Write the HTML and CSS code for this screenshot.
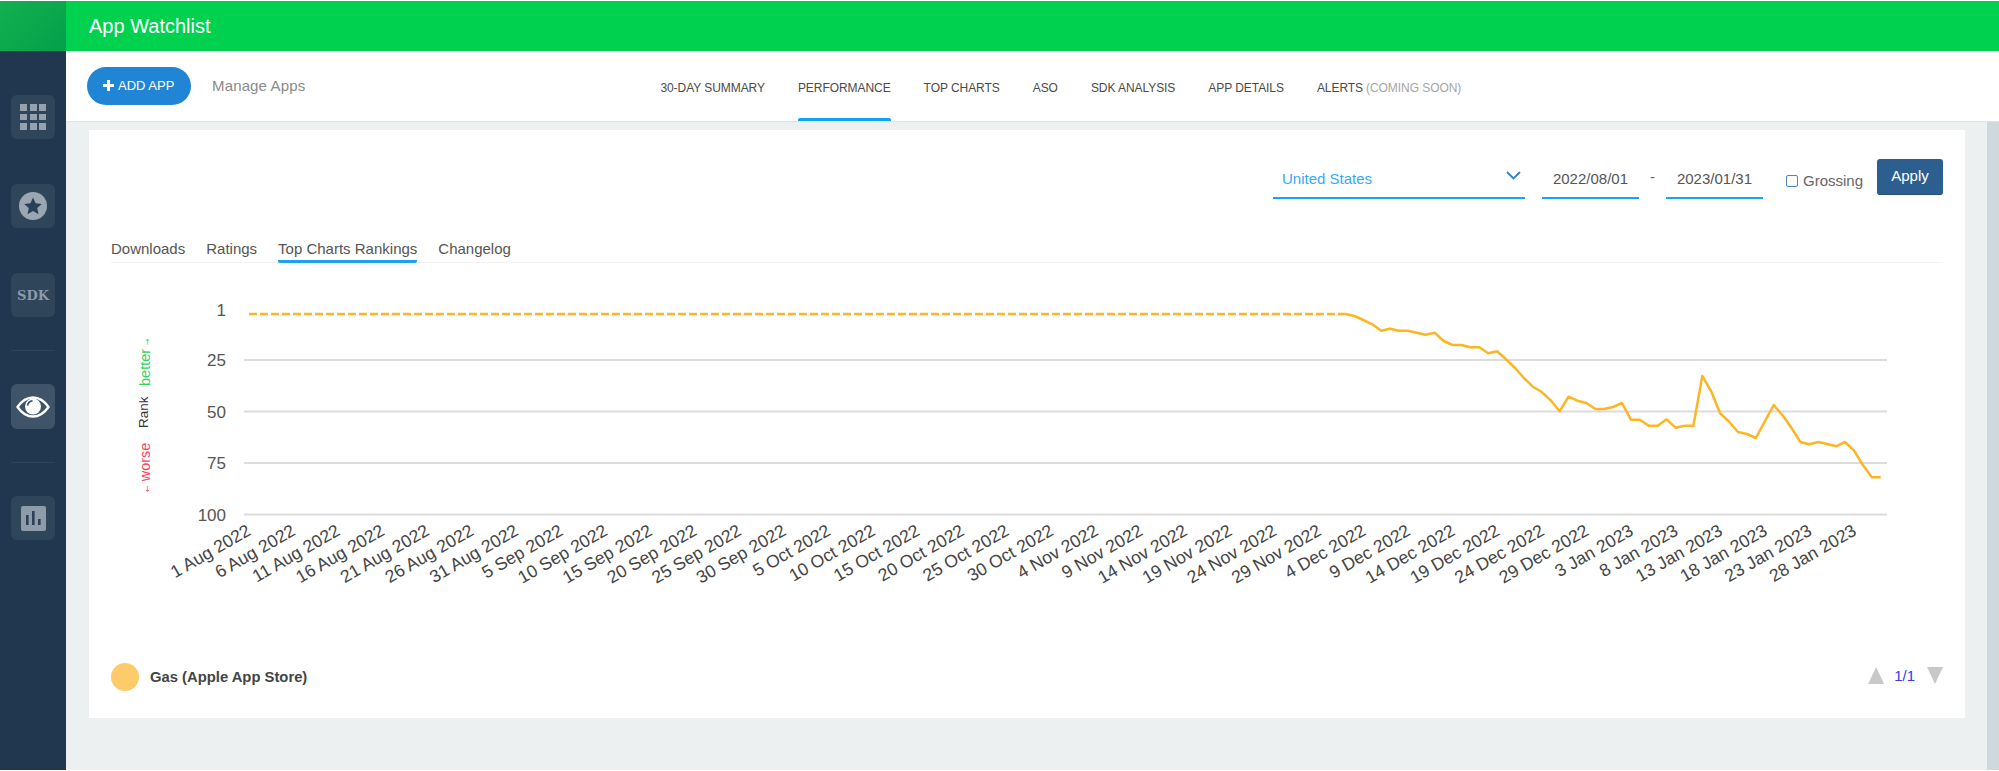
FILE: index.html
```html
<!DOCTYPE html>
<html lang="en">
<head>
<meta charset="utf-8">
<title>App Watchlist</title>
<link rel="stylesheet" href="styles.css">
</head>
<body>
<div class="app">
  <header class="topbar">
    <div class="brand"></div>
    <h1 class="title">App Watchlist</h1>
  </header>
  <div class="layout">
    <aside class="sidebar">
      <div class="side-item">
        <svg class="side-icon" width="26" height="26" viewBox="0 0 26 26"><g fill="#95a1ae"><rect x="0" y="0" width="7" height="7"/><rect x="10" y="0" width="7" height="7"/><rect x="19" y="0" width="7" height="7"/><rect x="0" y="10" width="7" height="6"/><rect x="10" y="10" width="7" height="6"/><rect x="19" y="10" width="7" height="6"/><rect x="0" y="19" width="7" height="7"/><rect x="10" y="19" width="7" height="7"/><rect x="19" y="19" width="7" height="7"/></g></svg>
      </div>
      <div class="side-item">
        <svg class="side-icon" width="28" height="28" viewBox="0 0 28 28"><circle cx="14" cy="14" r="14" fill="#9aa6b2"/><path d="M14 5.5l2.6 5.7 6.2.7-4.6 4.2 1.3 6.1L14 19.1l-5.5 3.1 1.3-6.1-4.6-4.2 6.2-.7z" fill="#2a4058"/></svg>
      </div>
      <div class="side-item"><span class="sdk">SDK</span></div>
      <div class="side-div"></div>
      <div class="side-item active">
        <svg class="side-icon" width="34" height="22" viewBox="0 0 34 22"><path d="M1.5 11C6 4.5 11 1.5 17 1.5S28 4.5 32.500 11C28 17.500 23 20.500 17 20.500S6 17.500 1.500 11z" fill="none" stroke="#fff" stroke-width="2.400"/><circle cx="17" cy="10.500" r="8" fill="#fff"/><path d="M11.500 9.500C12 6.800 14 5 16.500 4.800" fill="none" stroke="#3f5468" stroke-width="1.800"/></svg>
      </div>
      <div class="side-div"></div>
      <div class="side-item">
        <svg class="side-icon" width="25" height="25" viewBox="0 0 25 25"><rect width="25" height="25" rx="2" fill="#8e9ba8"/><g fill="#2b4159"><rect x="5" y="9" width="2.600" height="10"/><rect x="11" y="5" width="2.600" height="14"/><rect x="17" y="13" width="2.600" height="6"/></g></svg>
      </div>
    </aside>
    <main class="main">
      <div class="subnav">
        <button class="add-btn" type="button">
          <svg class="plus" width="11" height="11" viewBox="0 0 11 11"><path d="M4 0h3v4h4v3H7v4H4V7H0V4h4z" fill="#fff"/></svg>
          ADD APP
        </button>
        <a class="manage">Manage Apps</a>
        <nav class="nav">
          <a class="nav-link">30-DAY SUMMARY</a>
          <a class="nav-link current">PERFORMANCE</a>
          <a class="nav-link">TOP CHARTS</a>
          <a class="nav-link">ASO</a>
          <a class="nav-link">SDK ANALYSIS</a>
          <a class="nav-link">APP DETAILS</a>
          <a class="nav-link">ALERTS <span class="soon">(COMING SOON)</span></a>
        </nav>
      </div>
      <div class="content">
        <div class="pane">
          <section class="card">
            <div class="filters">
              <div class="select"><span>United States</span>
                <svg width="15" height="9" viewBox="0 0 15 9"><path d="M1 1l6.500 6.500L14 1" fill="none" stroke="#2f7fd0" stroke-width="1.800"/></svg>
              </div>
              <div class="date">2022/08/01</div>
              <div class="dash">-</div>
              <div class="date">2023/01/31</div>
              <label class="gross"><span class="check"></span>Grossing</label>
              <button class="apply" type="button">Apply</button>
            </div>
            <div class="tabs">
              <a class="tab">Downloads</a>
              <a class="tab">Ratings</a>
              <a class="tab on">Top Charts Rankings</a>
              <a class="tab">Changelog</a>
            </div>
            <svg class="chart" width="1876" height="387" viewBox="89 263 1876 387">
              <g class="grid">
                <line x1="244" y1="360" x2="1887" y2="360"/>
                <line x1="244" y1="411.500" x2="1887" y2="411.500"/>
                <line x1="244" y1="463" x2="1887" y2="463"/>
                <line x1="244" y1="514.500" x2="1887" y2="514.500"/>
              </g>
              <g class="ylab">
                <text x="226" y="316">1</text>
                <text x="226" y="366">25</text>
                <text x="226" y="418">50</text>
                <text x="226" y="469">75</text>
                <text x="226" y="521">100</text>
              </g>
              <g class="rank">
                <text class="better" transform="translate(150 386) rotate(-90)">better <tspan class="arrow">→</tspan></text>
                <text class="rk" transform="translate(148 428) rotate(-90)">Rank</text>
                <text class="worse" transform="translate(150 492) rotate(-90)"><tspan class="arrow">←</tspan> worse</text>
              </g>
              <line class="series dashed" x1="249" y1="314" x2="1345.500" y2="314"/>
              <polyline class="series" points="1345.500,314 1354.400,316 1363.300,320 1372.300,324.300 1381.200,330.700 1390.100,328.700 1399,330.700 1407.900,330.700 1416.900,332.700 1425.800,334.700 1434.700,332.700 1443.600,341 1452.500,345 1461.500,345 1470.400,347.300 1479.300,347.300 1488.200,353.300 1497.100,351.300 1506,359.300 1515,368 1523.900,378 1532.800,386.700 1541.700,392 1550.700,400.300 1559.600,411.300 1568.500,396.700 1577.400,400.700 1586.300,403 1595.300,409 1604.200,409 1613.100,407 1622,403 1630.900,419.700 1639.900,419.700 1648.800,425.700 1657.700,425.700 1666.600,419.300 1675.500,427.700 1684.500,425.700 1693.400,425.700 1702.300,376 1711.200,391.300 1720.100,413.300 1729.100,421.700 1738,432 1746.900,434 1755.800,438 1764.700,421.700 1773.700,405 1782.600,415.300 1791.500,428 1800.400,442 1809.300,444.300 1818.300,442 1827.200,444 1836.100,446.300 1845,442 1853.900,450.300 1862.900,465 1871.800,477.300 1880.700,477.300"/>
              <g class="xlab">
                <text transform="translate(252 534) rotate(-30)">1 Aug 2022</text>
                <text transform="translate(296.600 534) rotate(-30)">6 Aug 2022</text>
                <text transform="translate(341.200 534) rotate(-30)">11 Aug 2022</text>
                <text transform="translate(385.800 534) rotate(-30)">16 Aug 2022</text>
                <text transform="translate(430.400 534) rotate(-30)">21 Aug 2022</text>
                <text transform="translate(475 534) rotate(-30)">26 Aug 2022</text>
                <text transform="translate(519.600 534) rotate(-30)">31 Aug 2022</text>
                <text transform="translate(564.200 534) rotate(-30)">5 Sep 2022</text>
                <text transform="translate(608.800 534) rotate(-30)">10 Sep 2022</text>
                <text transform="translate(653.400 534) rotate(-30)">15 Sep 2022</text>
                <text transform="translate(698 534) rotate(-30)">20 Sep 2022</text>
                <text transform="translate(742.600 534) rotate(-30)">25 Sep 2022</text>
                <text transform="translate(787.200 534) rotate(-30)">30 Sep 2022</text>
                <text transform="translate(831.800 534) rotate(-30)">5 Oct 2022</text>
                <text transform="translate(876.400 534) rotate(-30)">10 Oct 2022</text>
                <text transform="translate(921 534) rotate(-30)">15 Oct 2022</text>
                <text transform="translate(965.600 534) rotate(-30)">20 Oct 2022</text>
                <text transform="translate(1010.200 534) rotate(-30)">25 Oct 2022</text>
                <text transform="translate(1054.800 534) rotate(-30)">30 Oct 2022</text>
                <text transform="translate(1099.400 534) rotate(-30)">4 Nov 2022</text>
                <text transform="translate(1144 534) rotate(-30)">9 Nov 2022</text>
                <text transform="translate(1188.600 534) rotate(-30)">14 Nov 2022</text>
                <text transform="translate(1233.200 534) rotate(-30)">19 Nov 2022</text>
                <text transform="translate(1277.800 534) rotate(-30)">24 Nov 2022</text>
                <text transform="translate(1322.400 534) rotate(-30)">29 Nov 2022</text>
                <text transform="translate(1367 534) rotate(-30)">4 Dec 2022</text>
                <text transform="translate(1411.600 534) rotate(-30)">9 Dec 2022</text>
                <text transform="translate(1456.200 534) rotate(-30)">14 Dec 2022</text>
                <text transform="translate(1500.800 534) rotate(-30)">19 Dec 2022</text>
                <text transform="translate(1545.400 534) rotate(-30)">24 Dec 2022</text>
                <text transform="translate(1590 534) rotate(-30)">29 Dec 2022</text>
                <text transform="translate(1634.600 534) rotate(-30)">3 Jan 2023</text>
                <text transform="translate(1679.200 534) rotate(-30)">8 Jan 2023</text>
                <text transform="translate(1723.800 534) rotate(-30)">13 Jan 2023</text>
                <text transform="translate(1768.400 534) rotate(-30)">18 Jan 2023</text>
                <text transform="translate(1813 534) rotate(-30)">23 Jan 2023</text>
                <text transform="translate(1857.600 534) rotate(-30)">28 Jan 2023</text>
              </g>
            </svg>
            <div class="legend">
              <span class="dot"></span>
              <span class="legend-name">Gas (Apple App Store)</span>
              <div class="pager">
                <span class="tri up"></span>
                <span class="pg">1/1</span>
                <span class="tri down"></span>
              </div>
            </div>
          </section>
        </div>
        <div class="scrollbar"></div>
      </div>
    </main>
  </div>
</div>
</body>
</html>
```

FILE: styles.css
```css
* { box-sizing: border-box; }
html, body { margin: 0; padding: 0; background: #fff; }
body { font-family: "Liberation Sans", Arial, sans-serif; color: #555; overflow: hidden; }

.app { display: flex; flex-direction: column; width: 1999px; height: 769px; margin: 1px 0; }

.topbar { display: flex; align-items: center; height: 50px; background: #00d14f; flex: none; }
.brand { width: 66px; height: 100%; background: linear-gradient(135deg, #12b050, #04a04a); }
.title { margin: 0 0 0 23px; font-size: 20px; font-weight: 400; color: #fff; line-height: 1; }

.layout { display: flex; flex: 1; min-height: 0; }

.sidebar { width: 66px; flex: none; padding: 44px 11px 0; background: #213750; box-shadow: 1px 0 0 #c3ccd3; }
.side-item { display: flex; align-items: center; justify-content: center; height: 44px; border-radius: 6px; background: #2f4559; }
.side-item + .side-item { margin-top: 45px; }
.side-item.active { height: 45px; background: #3f5468; }
.side-div { height: 1px; margin: 33px 0; background: #2e4358; }
.sdk { font-family: "DejaVu Serif", serif; font-weight: 700; font-size: 13px; color: #8d9bab; }

.main { flex: 1; display: flex; flex-direction: column; min-width: 0; }

.subnav { display: flex; align-items: center; height: 71px; flex: none; padding: 0 0 1px 21px; background: #fff; border-bottom: 1px solid #dfe3e5; }
.add-btn { display: flex; align-items: center; gap: 4px; width: 104px; height: 38px; padding: 0 0 0 16px; border: 0; border-radius: 19px; background: #2185d6; color: #fff; font: 400 13px "Liberation Sans", Arial, sans-serif; }
.manage { margin-left: 21px; font-size: 15px; letter-spacing: .15px; color: #8a8a8a; }
.nav { display: flex; align-self: stretch; gap: 33px; margin-left: 355px; margin-bottom: -1px; }
.nav-link { position: relative; display: flex; align-items: center; gap: 3px; font-size: 12px; letter-spacing: -0.06px; color: #4a4a4a; padding-top: 3px; }
.nav-link.current::after { content: ""; position: absolute; left: 0; right: 0; bottom: 0; height: 3px; background: #0ea1f5; border-radius: 2px 2px 0 0; }
.soon { color: #a5a5a5; }

.content { flex: 1; display: flex; min-height: 0; background: #ecf0f1; }
.pane { flex: 1; display: flex; padding: 8px 22px 52px 23px; min-width: 0; }
.scrollbar { width: 12px; flex: none; background: #cfd8dc; }

.card { flex: 1; display: flex; flex-direction: column; background: #fff; min-width: 0; }

.filters { display: flex; align-items: flex-start; justify-content: flex-end; padding: 29px 22px 0; height: 69px; flex: none; }
.select, .date { height: 40px; border-bottom: 2px solid #18a3f8; font-size: 15px; display: flex; align-items: center; }
.select { justify-content: space-between; width: 252px; padding: 1px 4px 0 9px; color: #36a9fb; margin-right: 17px; }
.select svg { margin-bottom: 7px; }
.date { justify-content: center; width: 97px; color: #555; }
.dash { width: 27px; height: 36px; line-height: 36px; text-align: center; font-size: 15px; color: #666; }
.gross { display: flex; align-items: center; gap: 5px; height: 42px; margin-left: 23px; font-size: 15px; color: #666; }
.check { width: 12px; height: 12px; border: 1.500px solid #4d86c6; border-radius: 2px; margin-top: 1px; }
.apply { width: 66px; height: 36px; margin-left: 14px; padding: 0 0 3px; border: 0; border-bottom: 1px solid #23507a; border-radius: 3px; background: #2c5f8f; color: #fff; font: 400 15px "Liberation Sans", Arial, sans-serif; }

.tabs { display: flex; gap: 21px; height: 31px; flex: none; margin: 33px 22px 0; padding-top: 8px; border-bottom: 1px solid #f3f3f3; }
.tab { height: 23px; line-height: 17px; font-size: 15px; color: #555; border-bottom: 3px solid transparent; }
.tab.on { border-bottom-color: #1e9ff0; border-radius: 0 0 2px 2px; }

.chart { display: block; flex: none; }
.grid line { stroke: #dcdcdc; stroke-width: 2; }
.ylab text { font-size: 17px; fill: #555; text-anchor: end; }
.rank text { font-size: 14.500px; }
.rank .rk { font-size: 13.500px; }
.rank .arrow { font-family: "DejaVu Sans", sans-serif; font-size: 8px; }
.better { fill: #2fd35f; }
.rk { fill: #333; }
.worse { fill: #f8475a; }
.series { fill: none; stroke: #fdb525; stroke-width: 2.500; stroke-linejoin: round; }
.dashed { stroke-dasharray: 8 3; }
.xlab text { font-size: 17.600px; fill: #444; text-anchor: end; }

.legend { display: flex; align-items: center; height: 54px; flex: none; padding: 0 22px; }
.dot { width: 28px; height: 28px; border-radius: 50%; background: #fecb6b; }
.legend-name { margin-left: 11px; font-size: 14.800px; font-weight: 700; color: #444; }
.pager { display: flex; align-items: center; margin-left: auto; margin-top: -3px; }
.pg { margin: 0 12px 0 10px; font-size: 15px; color: #3a3ae0; }
.tri { width: 16px; height: 17px; background: #c8c8c8; }
.up { clip-path: polygon(50% 0, 100% 100%, 0 100%); }
.down { clip-path: polygon(0 0, 100% 0, 50% 100%); }
```
